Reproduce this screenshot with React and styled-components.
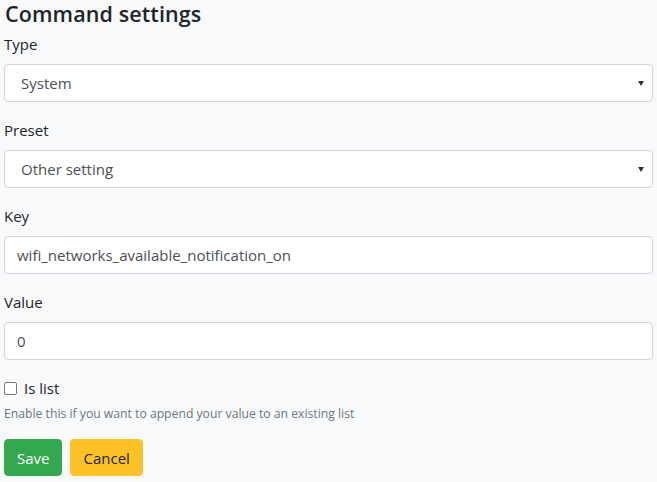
import React from "react";
import styled, { createGlobalStyle } from "styled-components";

const Global = createGlobalStyle`
  html, body { margin: 0; padding: 0; background: #f8f9fa; }
  body {
    font-family: "Open Sans", "Noto Sans", sans-serif;
    font-size: 16px;
    line-height: 1.5;
    color: #212529;
  }
  * { box-sizing: border-box; }
`;

const Page = styled.div`
  padding: 0 4px;
  width: 657px;
`;

const Heading = styled.h5`
  margin: 0 0 5px;
  font-size: 21.5px;
  font-weight: 600;
  line-height: 27px;
  padding-left: 1px;
  letter-spacing: 0.1px;
`;

const Group = styled.div`
  margin-bottom: 16px;
`;

const Label = styled.label`
  display: block;
  margin-bottom: 8px;
  font-size: 15px;
  line-height: 24px;
`;

const Field = styled.div`
  position: relative;
  height: 38px;
  border: 1px solid #ced4da;
  border-radius: 4px;
  background: #fff;
  display: flex;
  align-items: center;
  padding: 0 ${(p) => (p.$select ? "16px" : "12px")};
  font-size: 15px;
  color: #495057;
`;

const Caret = styled.span`
  position: absolute;
  right: 8px;
  top: 50%;
  margin-top: -2px;
  width: 0;
  height: 0;
  border-left: 3.5px solid transparent;
  border-right: 3.5px solid transparent;
  border-top: 5px solid #333;
`;

const Check = styled.div`
  display: flex;
  align-items: center;
  gap: 7px;
  font-size: 15px;
  line-height: 24px;
`;

const Box = styled.span`
  width: 13px;
  height: 13px;
  border: 1px solid #767676;
  border-radius: 2px;
  background: #fff;
`;

const Help = styled.div`
  margin-top: 4px;
  font-size: 12.2px;
  line-height: 19px;
  color: #6c757d;
`;

const Buttons = styled.div`
  display: flex;
  gap: 8px;
`;

const Button = styled.button`
  height: 37px;
  padding: 0 12px;
  border: 1px solid ${(p) => p.$bg};
  border-radius: 4px;
  background: ${(p) => p.$bg};
  color: ${(p) => p.$fg};
  font-family: inherit;
  font-size: 15px;
  line-height: 24px;
`;

const fields = [
  { label: "Type", value: "System", select: true },
  { label: "Preset", value: "Other setting", select: true },
  { label: "Key", value: "wifi_networks_available_notification_on" },
  { label: "Value", value: "0" },
];

export default function App() {
  return (
    <Page>
      <Global />
      <Heading>Command settings</Heading>
      {fields.map((f) => (
        <Group key={f.label}>
          <Label>{f.label}</Label>
          <Field $select={f.select}>
            {f.value}
            {f.select && <Caret />}
          </Field>
        </Group>
      ))}
      <Group>
        <Check>
          <Box />
          <span>Is list</span>
        </Check>
        <Help>Enable this if you want to append your value to an existing list</Help>
      </Group>
      <Buttons>
        <Button $bg="#34a84f" $fg="#fff">Save</Button>
        <Button $bg="#fcc227" $fg="#212529">Cancel</Button>
      </Buttons>
    </Page>
  );
}
